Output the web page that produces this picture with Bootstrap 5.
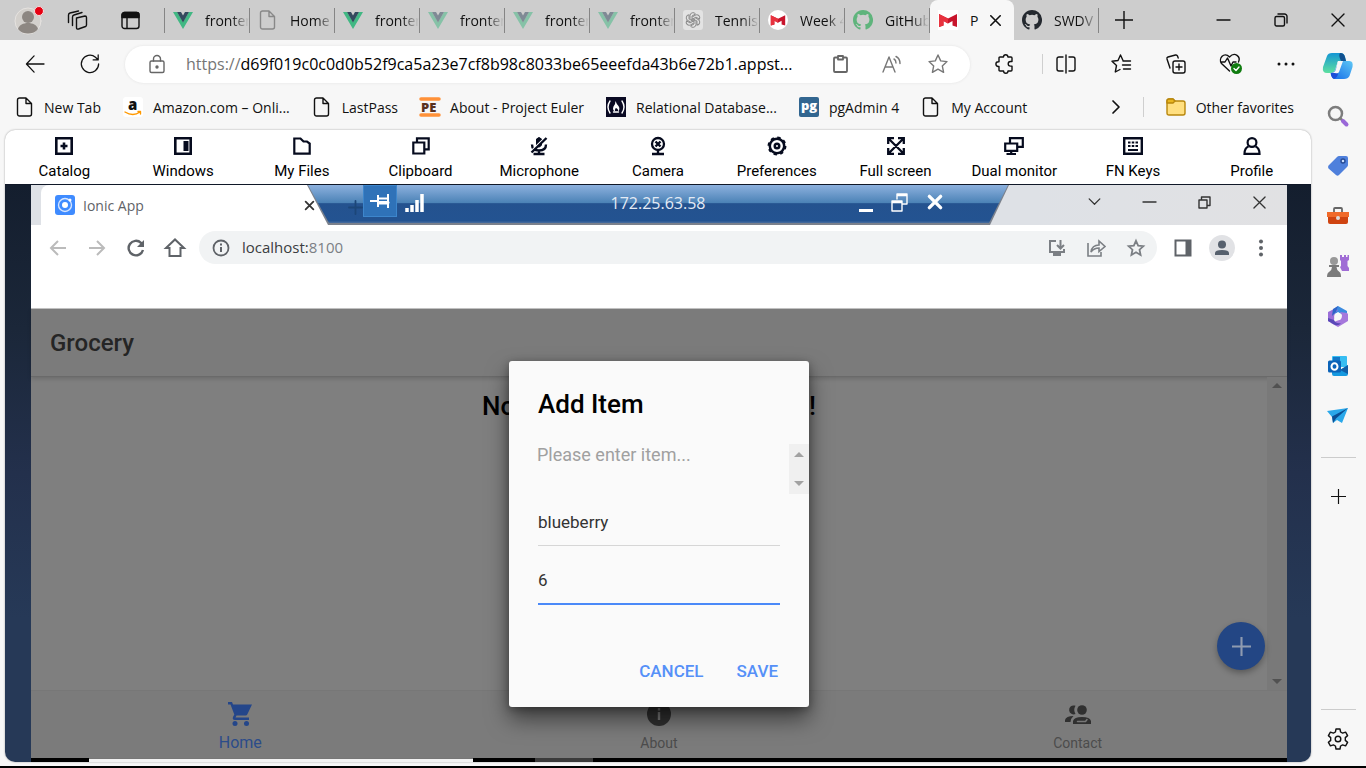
<!DOCTYPE html>
<html lang="en">
<head>
<meta charset="utf-8">
<meta name="viewport" content="width=device-width, initial-scale=1">
<title>Ionic App</title>
<link href="https://cdn.jsdelivr.net/npm/bootstrap@5.3.0/dist/css/bootstrap.min.css" rel="stylesheet">
<style>
  body { font-family: "Open Sans", "Noto Sans", sans-serif; font-size: 14px; color: #111; background: #f7f7f7; border-bottom: 2px solid #000; }
  button { font: inherit; color: inherit; background: none; border: 0; padding: 0; }
  a { color: inherit; text-decoration: none; }
  svg { display: block; flex: none; overflow: visible; fill: none; stroke: currentColor; stroke-width: 1.4; stroke-linecap: round; stroke-linejoin: round; }
  .bold-line { stroke-width: 2; }
  .roboto { font-family: Roboto, sans-serif; }
  .icon-btn { width: 40px; height: 40px; display: flex; align-items: center; justify-content: center; flex: none; }
  .shrinkable { min-width: 0; min-height: 0; }

  /* browser tab strip */
  .strip { height: 40px; background: #cdcdcd; }
  .strip-tools { width: 165px; padding-left: 16px; }
  .strip-tools .spaces { margin: 0 33px 0 23px; }
  .btab { flex: 0 1 85px; min-width: 0; height: 40px; padding-left: 8px; position: relative; }
  .btab::after { content: ""; width: 1px; height: 25px; background: #858585; flex: none; }
  .btab > svg { width: 20px; }
  .btab-title { flex: 1; min-width: 0; margin-left: 12px; overflow: hidden; white-space: nowrap; mask-image: linear-gradient(90deg, #000 60%, transparent); -webkit-mask-image: linear-gradient(90deg, #000 60%, transparent); }
  .btab.current { flex-basis: 84px; background: #f7f7f7; border-radius: 8px 8px 0 0; }
  .btab.current::after { display: none; }
  .faded { opacity: .5; }
  .win-btn { width: 57px; height: 40px; }

  /* address bar */
  .nav-row { height: 48px; gap: 15px; padding: 0 6px 0 15px; }
  .address { height: 37px; border-radius: 19px; background: #fff; box-shadow: 0 0 3px #e2e2e2; padding: 0 12px 0 23px; min-width: 0; }
  .url { font-size: 16px; white-space: nowrap; overflow: hidden; text-overflow: ellipsis; color: #000; }
  .url span { color: #767676; }
  .rule-v { width: 1px; height: 20px; background: #cfcfcf; flex: none; }
  .strip .rule-v { height: 25px; background: #858585; }
  .nav-row .rule-v { margin: 0 -12px 0 2px; }

  .favs { height: 42px; gap: 22px; padding: 0 18px 4px 16px; white-space: nowrap; }
  .favs a { display: flex; align-items: center; gap: 10px; }

  /* side rail */
  .rail { width: 54px; padding: 1px 2px 2px 0; }
  .rail-btn { width: 52px; height: 50px; display: flex; align-items: center; justify-content: center; flex: none; }
  .rail-rule { width: 35px; height: 1px; background: #ccc; flex: none; }
  .rail-add { margin-top: 13px; }

  /* streaming client */
  .client { margin: 0 1px 4px 5px; border-radius: 10px; background: #fff; overflow: hidden; box-shadow: 0 0 2px #999; }
  .menu-item { flex: 1 1 0; height: 54px; font-size: 15px; line-height: 18px; color: #000; padding-top: 7px; }
  .menu-item svg { stroke: #060b1e; stroke-width: 2.6; stroke-linecap: butt; stroke-linejoin: miter; margin-bottom: 7px; }
  .stage { background: linear-gradient(#141e2e, #1b2739 25%, #23304c 50%, #263957 75%); border-top: 1px solid #101828; padding: 0 24px 0 26px; }

  /* remote browser */
  .rtabs { height: 40px; background: linear-gradient(90deg, #dee1e6 80%, #e1e1e3); position: relative; }
  .rtab { width: 287px; margin-left: 10px; background: #fff; border-radius: 8px 8px 0 0; padding: 0 14px; color: #5f6368; font-size: 14px; }
  .rwin { width: 55px; height: 34px; display: flex; align-items: center; justify-content: center; color: #333; }
  .rdp { position: absolute; top: 0; left: 50%; width: 702px; height: 40px; margin-left: -352px; background: #7b818c; clip-path: polygon(0 0, 100% 0, 683px 100%, 21px 100%); }
  .rdp-face { height: 38px; padding: 0 65px 4px 42px; clip-path: polygon(1px 0, 701px 0, 682px 100%, 22px 100%); background: linear-gradient(#8db1de, #4b82b6 47%, #24528f 49%, #235391 94%, #4a6f9f); color: #fff; }
  .rdp-host { padding: 8px 0 0 33px; font-size: 16px; line-height: 20px; color: #e4ebf5; }
  .rdp-restore { margin: 8px 18px 0; }
  .pin { width: 34px; height: 32px; margin-left: 1px; background: #2f72b8; border: 1px solid #3d86cc; }
  .rnav { height: 45px; background: #fff; padding: 0 7px; color: #5f6368; }
  .rbtn { width: 39px; height: 34px; display: flex; align-items: center; justify-content: center; flex: none; }
  .rbtn svg { stroke-width: 2; stroke-linecap: butt; stroke-linejoin: miter; }
  .raddr { height: 33px; border-radius: 17px; background: #f1f3f4; margin: 0 6px 0 5px; padding: 0 2px 0 13px; font-size: 15px; color: #7b7f84; }
  .raddr b { font-weight: 400; color: #3a3d41; }
  .rgap { height: 39px; background: #fff; border-bottom: 1px solid #c4c4c4; }

  /* grocery app */
  .grocery { background: #7f7f7f; position: relative; min-height: 0; }
  .g-head { height: 68px; background: #7b7b7b; border-bottom: 1px solid #6a6a6a; box-shadow: 0 2px 4px rgba(0,0,0,.15); font-size: 24px; font-weight: 500; color: #252525; padding-left: 19px; }
  .g-body { position: relative; }
  .g-note { width: 334px; font-size: 26px; line-height: 32px; font-weight: 500; color: #000; margin: 13px auto 0; }
  .g-scroll { width: 20px; background: #797979; color: #515151; padding: 6px 0; }
  .arrow { border: 5px solid transparent; width: 0; height: 0; }
  .arrow.up { border-top: 0; border-bottom-color: currentColor; }
  .arrow.down { border-bottom: 0; border-top-color: currentColor; }
  .fab { position: absolute; right: 22px; bottom: 20px; width: 48px; height: 48px; border-radius: 50%; background: #234684; color: #8f9bb0; box-shadow: 0 3px 6px rgba(0,0,0,.3); }
  .g-tabs { height: 68px; background: #7b7b7b; border-top: 1px solid #777; }
  .g-tab { flex: 1 1 0; color: #4c4c4c; font-size: 14px; line-height: 18px; padding-top: 11px; gap: 8px; }
  .g-tab.current { color: #2b4c8a; font-size: 16px; }
  .g-tab svg { fill: #303030; stroke: none; }
  .g-tab.current svg { fill: #24468a; }
  .veil { position: absolute; inset: 0; }
  .dialog { width: 300px; background: #fafafa; border-radius: 3px; box-shadow: 0 12px 22px rgba(0,0,0,.5), 0 2px 8px rgba(0,0,0,.3); color: #000; }
  .dialog h2 { font-size: 26px; line-height: 32px; font-weight: 500; margin: 0; padding: 27px 29px 24px; }
  .d-msg { height: 50px; font-size: 18px; line-height: 22px; color: #a0a0a0; }
  .d-scroll { width: 20px; background: #f0f0f0; color: #a2a2a2; padding: 8px 0; }
  .d-fields { padding: 4px 29px 0; }
  .dialog input { display: block; width: 100%; height: 48px; border: 0; border-bottom: 1px solid #d6d6d6; border-radius: 0; background: none; outline: 0; padding: 2px 0 0; font-size: 17px; color: #333; }
  .dialog input.active { height: 50px; border-bottom: 2px solid #4a89f8; margin-top: 9px; }
  .d-actions { padding: 50px 31px 20px; gap: 33px; font-size: 17px; font-weight: 500; color: #5590f8; line-height: 32px; }

  .taskline { height: 4px; background: #000; }
  .taskline i { background: #f2f2f2; width: 384px; margin-left: 58px; border-top: 1px solid #777; }
  .taskline u { background: #3b3b3b; width: 58px; margin-left: 62px; }
</style>
</head>
<body class="d-flex flex-column vh-100 overflow-hidden">

<svg width="0" height="0" class="position-absolute">
  <defs>
    <symbol id="vue" viewBox="0 0 20 18"><path d="M0 1h4l6 10 6-10h4L10 18z" fill="#41b883" stroke="none"/><path d="M4 1h4l2 3.500L12 1h4L10 11.500z" fill="#34495e" stroke="none"/></symbol>
    <symbol id="page" viewBox="0 0 18 20"><path d="M3.500 1H10l5.500 5.500V17a2 2 0 0 1-2 2h-10a2 2 0 0 1-2-2V3a2 2 0 0 1 2-2zM10 1v5.500h5.500"/></symbol>
    <symbol id="mcafee" viewBox="0 0 20 20"><path d="M1 4l9 4.500L19 4v13l-4.500-1.500V11L10 13.500 5.500 11v4.500L1 17z" fill="#c8142c" stroke="none"/><path d="M1 4l9 4.500v5L5.500 11v4.500L1 17z" fill="#e8333f" stroke="none"/></symbol>
    <symbol id="github" viewBox="0 0 16 16"><path stroke="none" fill="currentColor" d="M8 0C3.580 0 0 3.580 0 8c0 3.540 2.290 6.530 5.470 7.590.4.070.55-.17.55-.38 0-.19-.01-.82-.01-1.490-2.010.37-2.530-.49-2.690-.94-.09-.23-.48-.94-.82-1.130-.28-.15-.68-.52-.01-.53.63-.01 1.080.58 1.230.82.72 1.210 1.870.87 2.330.66.07-.52.28-.87.51-1.070-1.780-.2-3.640-.89-3.640-3.950 0-.87.31-1.590.82-2.150-.08-.2-.36-1.020.08-2.120 0 0 .67-.21 2.200.82a7.600 7.600 0 0 1 4 0c1.530-1.040 2.200-.82 2.200-.82.44 1.100.16 1.920.08 2.120.51.56.82 1.270.82 2.150 0 3.070-1.870 3.750-3.650 3.950.29.25.54.73.54 1.480 0 1.070-.01 1.930-.01 2.200 0 .21.15.46.55.38A8 8 0 0 0 8 0z"/></symbol>
    <symbol id="xmark" viewBox="0 0 14 14"><path d="M1 1l12 12M13 1L1 13"/></symbol>
    <symbol id="plus" viewBox="0 0 18 18"><path d="M9 0v18M0 9h18"/></symbol>
    <symbol id="restore" viewBox="0 0 14 14"><path d="M1 5a1.500 1.500 0 0 1 1.500-1.500H9A1.500 1.500 0 0 1 10.500 5v6.500A1.500 1.500 0 0 1 9 13H2.500A1.500 1.500 0 0 1 1 11.500zM4 1h6.500a2.500 2.500 0 0 1 2.500 2.500V10"/></symbol>
    <symbol id="star" viewBox="0 0 20 20"><path d="M10 1l2.700 5.900 6.300.7-4.700 4.300 1.300 6.400L10 15.100l-5.600 3.200 1.300-6.400L1 7.600l6.300-.7z"/></symbol>
  </defs>
</svg>

<header class="strip d-flex align-items-center">
  <div class="strip-tools d-flex align-items-center flex-shrink-0">
    <button aria-label="Profile"><svg width="28" height="30" viewBox="0 0 28 30"><circle cx="12" cy="16" r="13" fill="#d3d0cc" stroke="#e6e3e0" stroke-width="1"/><circle cx="12" cy="12" r="6" fill="#8d8782" stroke="none"/><path d="M2 24c2-8 18-8 20 0-4 6-16 6-20 0z" fill="#8d8782" stroke="none"/><circle cx="23" cy="6" r="4.500" fill="#e60012" stroke="#f4dcdc" stroke-width="1"/></svg></button>
    <button class="spaces" aria-label="Workspaces"><svg width="21" height="20" viewBox="0 0 20 20"><path d="M9 8l8.500-2q1.500 0 1.500 1.500V15q0 1-1 1.500l-7 2.500q-2 .5-2-1.500zM5 15.500V7q0-1.500 1.500-2l8-2.500M1 12.500V5q0-1.500 1.500-2L11 1"/></svg></button>
    <button aria-label="Tab actions"><svg width="19" height="19" viewBox="0 0 19 19"><rect x="1" y="1.500" width="17" height="16" rx="2.500"/><path d="M1 4a2.500 2.500 0 0 1 2.500-2.500h12A2.500 2.500 0 0 1 18 4v2.500H1z" fill="currentColor"/><path d="M6 7v10"/></svg></button>
    <span class="rule-v ms-auto"></span>
  </div>
  <div class="btab d-flex align-items-center"><svg width="20" height="18"><use href="#vue"/></svg><span class="btab-title">fronten</span></div>
  <div class="btab d-flex align-items-center"><svg width="18" height="20" color="#888"><use href="#page"/></svg><span class="btab-title">Home</span></div>
  <div class="btab d-flex align-items-center"><svg width="20" height="18"><use href="#vue"/></svg><span class="btab-title">fronten</span></div>
  <div class="btab d-flex align-items-center"><svg class="faded" width="20" height="18"><use href="#vue"/></svg><span class="btab-title">fronten</span></div>
  <div class="btab d-flex align-items-center"><svg class="faded" width="20" height="18"><use href="#vue"/></svg><span class="btab-title">fronten</span></div>
  <div class="btab d-flex align-items-center"><svg class="faded" width="20" height="18"><use href="#vue"/></svg><span class="btab-title">fronten</span></div>
  <div class="btab d-flex align-items-center"><svg width="20" height="20" viewBox="0 0 20 20"><rect width="20" height="20" rx="3" fill="#e3e3e3" stroke="none"/><g stroke="#8a8a8a" stroke-width="1"><path id="knot" d="M7 8.500V5.500a3 3 0 0 1 5.500-1.500L9 6v5"/><use href="#knot" transform="rotate(60 10 10)"/><use href="#knot" transform="rotate(120 10 10)"/><use href="#knot" transform="rotate(180 10 10)"/><use href="#knot" transform="rotate(240 10 10)"/><use href="#knot" transform="rotate(300 10 10)"/></g></svg><span class="btab-title">Tennis</span></div>
  <div class="btab d-flex align-items-center"><svg width="20" height="20" viewBox="0 0 20 20"><circle cx="10" cy="10" r="10" fill="#fff" stroke="none"/><use href="#mcafee" x="2" y="2" width="16" height="16"/></svg><span class="btab-title">Week 4</span></div>
  <div class="btab d-flex align-items-center"><svg width="20" height="20" color="#5fb47c"><use href="#github"/></svg><span class="btab-title">GitHub</span></div>
  <div class="btab current d-flex align-items-center"><svg width="20" height="20"><rect width="20" height="20" fill="#fff" stroke="none"/><use href="#mcafee"/></svg><span class="ms-2 ps-1">P</span><button class="ms-2 ps-1" aria-label="Close tab"><svg class="bold-line" width="11" height="11"><use href="#xmark"/></svg></button></div>
  <div class="btab d-flex align-items-center"><svg width="20" height="20" color="#24292f"><use href="#github"/></svg><span class="btab-title">SWDV</span></div>
  <button class="ms-3" aria-label="New tab"><svg width="18" height="18"><use href="#plus"/></svg></button>
  <div class="ms-auto d-flex">
    <button class="win-btn d-flex align-items-center justify-content-center" aria-label="Minimize"><svg width="13" height="2"><path d="M0 1h13"/></svg></button>
    <button class="win-btn d-flex align-items-center justify-content-center" aria-label="Restore"><svg width="14" height="14"><use href="#restore"/></svg></button>
    <button class="win-btn d-flex align-items-center justify-content-center" aria-label="Close"><svg width="14" height="14"><use href="#xmark"/></svg></button>
  </div>
</header>

<div class="d-flex flex-fill shrinkable">
  <main class="flex-fill d-flex flex-column shrinkable">
    <nav class="nav-row d-flex align-items-center">
      <button class="icon-btn" aria-label="Back"><svg width="20" height="18" viewBox="0 0 22 20"><path d="M10 1L1.500 10l8.500 9M2 10h19"/></svg></button>
      <button class="icon-btn" aria-label="Reload"><svg width="20" height="20" viewBox="0 0 22 22"><path d="M20.500 11A9.500 9.500 0 1 1 17 3.500L19.500 6M20 1v5.500h-5.500"/></svg></button>
      <div class="address flex-fill d-flex align-items-center">
        <svg width="18" height="20" viewBox="0 0 18 20" color="#666"><rect x="2" y="7" width="14" height="11.500" rx="1.500"/><path d="M5.500 7V5a3.500 3.500 0 0 1 7 0v2"/><circle cx="9" cy="13" r="1" fill="currentColor"/></svg>
        <div class="url flex-fill ms-3 ps-1"><span>https://</span>d69f019c0c0d0b52f9ca5a23e7cf8b98c8033be65eeefda43b6e72b1.appst...</div>
        <button class="flex-shrink-0 me-3" aria-label="Clipboard"><svg width="18" height="18" viewBox="0 0 18 18" color="#666"><path d="M6 2.500H3Q2 2.500 2 3.500V16q0 1 1 1h11q1 0 1-1V3.500q0-1-1-1h-3M6 1h5v3.500H6z" stroke-width="1.800"/></svg></button>
        <button class="flex-shrink-0 ms-3 me-2" aria-label="Read aloud"><svg width="20" height="18" viewBox="0 0 20 18" color="#777"><path d="M1 17L7 2l6 15M3 12h8M12 4q2 1 2 4M14 1.500q4 2 4 7"/></svg></button>
        <button class="icon-btn ms-2" aria-label="Favorite"><svg width="20" height="20" color="#777"><use href="#star"/></svg></button>
      </div>
      <button class="icon-btn" aria-label="Extensions"><svg width="20" height="20" viewBox="0 0 20 20"><path d="M5 3h3.500a2.200 2.200 0 0 1 4.400 0H16q1 0 1 1v3.500h-1.500a2.300 2.300 0 0 0 0 4.600H17V16q0 1-1 1h-3a2.200 2.200 0 0 1-4.400 0H5q-1 0-1-1v-3.500H3.300a2.400 2.400 0 0 1 0-4.800H4V4q0-1 1-1z"/></svg></button>
      <span class="rule-v"></span>
      <button class="icon-btn" aria-label="Split screen"><svg width="20" height="20" viewBox="0 0 20 20"><path d="M7 3H3Q1 3 1 5v10q0 2 2 2h4M13 3h4q2 0 2 2v10q0 2-2 2h-4M10 1v18"/></svg></button>
      <button class="icon-btn" aria-label="Favorites"><svg width="20" height="20" viewBox="0 0 20 20"><path d="M12 6.500L9.500 1 7 6.500l-6 .8 4.500 4.200L4.300 18 9 15.500M12 7h7.500M11.500 11h8M12.500 15h7"/></svg></button>
      <button class="icon-btn" aria-label="Collections"><svg width="20" height="20" viewBox="0 0 20 20"><rect x="7" y="7" width="12" height="12" rx="2"/><path d="M13 10v6M10 13h6M4 14L1 5q-.4-1.500 1-2l7.500-2q1.500-.3 2 1l.7 2"/></svg></button>
      <button class="icon-btn" aria-label="Browser essentials"><svg width="24" height="22" viewBox="0 0 24 22"><path d="M10.500 18L2.500 10.500C-1 6 5-2 10.500 4 16-2 22 4 19.500 9M2 9h4l2.500-4 3.500 8 2-4h3"/><circle cx="17.500" cy="15.500" r="5.500" fill="#107c10" stroke="none"/><path d="M15 15.500l2 2 3-3.500" stroke="#fff"/></svg></button>
      <button class="icon-btn" aria-label="Settings and more"><svg width="18" height="4"><g fill="currentColor" stroke="none"><circle cx="2" cy="2" r="1.500"/><circle cx="9" cy="2" r="1.500"/><circle cx="16" cy="2" r="1.500"/></g></svg></button>
    </nav>

    <nav class="favs d-flex align-items-center">
      <a href="#"><svg width="18" height="20"><use href="#page"/></svg>New Tab</a>
      <a href="#"><svg width="20" height="20" viewBox="0 0 20 20"><rect width="20" height="20" rx="3" fill="#fff" stroke="none"/><text x="5" y="13" font-family="Open Sans" font-weight="800" font-size="15" fill="#111" stroke="none">a</text><path d="M2 15q8 5 15 0M15 14.500h2.500V17" stroke="#f90"/></svg>Amazon.com – Onli...</a>
      <a href="#"><svg width="20" height="20"><use href="#page"/></svg>LastPass</a>
      <a href="#"><svg width="20" height="20" viewBox="0 0 20 20"><path d="M1 2h18M1 18h18" stroke="#ff9138" stroke-width="3.500"/><text x="1" y="15" font-family="Open Sans" font-weight="800" font-size="13" fill="#5a3220" stroke="none">PE</text></svg>About - Project Euler</a>
      <a href="#"><svg width="20" height="20" viewBox="0 0 20 20"><rect width="20" height="20" fill="#0a0a23" stroke="none"/><path d="M4 4q-4 6 0 12M16 4q4 6 0 12M7.500 15h5" stroke="#fff"/><path d="M9.500 4q1 3 3 5 2 3-.500 5.500.5-2-1-3-1.500-1-1.500 0-1 1.500-.5 3-3-1.500-1.500-5 2-2 2-5.500z" fill="#fff" stroke="none"/></svg>Relational Database...</a>
      <a href="#"><svg width="20" height="20" viewBox="0 0 20 20"><rect width="20" height="20" rx="2" fill="#326690" stroke="none"/><text x="2" y="13" font-family="Open Sans" font-weight="800" font-size="13" fill="#fff" stroke="none">pg</text></svg>pgAdmin 4</a>
      <a href="#"><svg width="20" height="20"><use href="#page"/></svg>My Account</a>
      <button class="ms-auto" aria-label="More favorites"><svg width="10" height="16" viewBox="0 0 10 16"><path d="M2 2l6 6-6 6" stroke-width="1.700"/></svg></button>
      <span class="rule-v"></span>
      <a href="#"><svg width="20" height="18" viewBox="0 0 20 18"><path d="M1 3q0-2 2-2h4l2 2h8q2 0 2 2v10q0 2-2 2H3q-2 0-2-2z" fill="#ffdf80" stroke="#b8860b"/><path d="M1 5h6l2-2-2-2H3Q1 1 1 3z" fill="#e8b520" stroke="#b8860b"/></svg>Other favorites</a>
    </nav>

    <section class="client flex-fill d-flex flex-column">
      <nav class="d-flex roboto">
        <button class="menu-item d-flex flex-column align-items-center"><svg width="18" height="18" viewBox="0 0 18 18"><path d="M1.300 1.300h15.400v15.400H1.300zM9 5.500v7M5.500 9h7"/></svg>Catalog</button>
        <button class="menu-item d-flex flex-column align-items-center"><svg width="18" height="18" viewBox="0 0 18 18"><path d="M1.300 1.300h15.400v15.400H1.300z"/><path d="M12 4v10" stroke-width="5"/></svg>Windows</button>
        <button class="menu-item d-flex flex-column align-items-center"><svg width="18" height="18" viewBox="0 0 18 18"><path d="M1.300 1.500h6.200l3 3H14l2.700 2v10.200H1.300z" stroke-width="2.200"/></svg>My Files</button>
        <button class="menu-item d-flex flex-column align-items-center"><svg width="18" height="18" viewBox="0 0 18 18"><path d="M1.300 5.500h11v11h-11zM5 5V1.300h11.700v11H13" stroke-width="2.200"/></svg>Clipboard</button>
        <button class="menu-item d-flex flex-column align-items-center"><svg width="18" height="18" viewBox="0 0 18 18"><path d="M6.500 2q2.500-3 5 0v6q-2.500 4-5 0z" fill="#060b1e" stroke-width="1"/><path d="M2 7.500q0 6 7 6t7-6M9 13v4M3.500 17h11" stroke-width="2.400"/><path d="M1.500 13.500L15.500 0" stroke="#fff" stroke-width="1.500"/><path d="M1.500 15.500L16.500 1" stroke-width="2.400"/></svg>Microphone</button>
        <button class="menu-item d-flex flex-column align-items-center"><svg width="18" height="18" viewBox="0 0 18 18"><circle cx="9" cy="7" r="6" stroke-width="2.300"/><path d="M6.500 4.500l5 5M11.500 4.500l-5 5M9 13v4M3 17h12" stroke-width="2.400"/></svg>Camera</button>
        <button class="menu-item d-flex flex-column align-items-center"><svg width="20" height="18" viewBox="0 0 20 20"><circle cx="10" cy="10" r="8" stroke-width="2.800"/><circle cx="10" cy="10" r="9.500" stroke-width="2" stroke-dasharray="3.700 3.760"/><circle cx="10" cy="10" r="2.500" stroke-width="2.800"/></svg>Preferences</button>
        <button class="menu-item d-flex flex-column align-items-center"><svg width="18" height="18" viewBox="0 0 18 18"><path d="M1.200 7V1.200H7M11 1.200h5.800V7M16.800 11v5.800H11M7 16.800H1.200V11M2 2l14 14M16 2L2 16" stroke-width="2.300"/></svg>Full screen</button>
        <button class="menu-item d-flex flex-column align-items-center"><svg width="20" height="18" viewBox="0 0 20 18"><path d="M1.200 6.500h12v7.300h-12zM6 6V1.200h12.800v8.600H14M7.200 14v3M2.500 17h9.500" stroke-width="2.200"/></svg>Dual monitor</button>
        <button class="menu-item d-flex flex-column align-items-center"><svg width="20" height="18" viewBox="0 0 20 18"><path d="M1.200 1.200h17.600v15.600H1.200z" stroke-width="2.400"/><path d="M5 5.500h10M5 9h10" stroke-dasharray="2.500 1.250" stroke-width="2.200"/><path d="M5 13h10" stroke-width="2.200"/></svg>FN Keys</button>
        <button class="menu-item d-flex flex-column align-items-center"><svg width="18" height="18" viewBox="0 0 18 18"><circle cx="9" cy="5.500" r="4.400" stroke-width="2.200"/><path d="M5.500 9.500Q1.500 11 1.500 16.800h15q0-5.800-4-7.300" stroke-width="2.200"/></svg>Profile</button>
      </nav>

      <div class="stage flex-fill d-flex flex-column">
        <div class="rtabs d-flex">
          <div class="rtab d-flex align-items-center">
            <svg width="20" height="20" viewBox="0 0 20 20"><rect width="20" height="20" rx="3" fill="#3f8bff" stroke="none"/><circle cx="10" cy="10" r="6.500" stroke="#d5e5ff"/><circle cx="10" cy="10" r="3" fill="#fff" stroke="none"/><circle cx="15" cy="5" r="1.500" fill="#fff" stroke="none"/></svg>
            <span class="ms-2">Ionic App</span>
            <button class="ms-auto" aria-label="Close tab"><svg width="9" height="9" color="#333" viewBox="0 0 14 14"><path d="M1 1l12 12M13 1L1 13" stroke-width="2.800"/></svg></button>
          </div>
          <div class="ms-auto d-flex">
            <button class="rwin" aria-label="Search tabs"><svg width="13" height="8" viewBox="0 0 14 9"><path d="M1 1l6 6 6-6"/></svg></button>
            <button class="rwin" aria-label="Minimize"><svg width="13" height="2"><path d="M0 1h13"/></svg></button>
            <button class="rwin" aria-label="Restore"><svg width="13" height="13" viewBox="0 0 13 13"><path d="M1 4h8v8H1zM3.500 3.500V1H12v8.500H9.500"/></svg></button>
            <button class="rwin" aria-label="Close"><svg width="13" height="13"><use href="#xmark"/></svg></button>
          </div>
          <div class="rdp">
            <div class="rdp-face d-flex align-items-start">
              <svg class="mt-3" width="13" height="13" viewBox="0 0 18 18" color="#1c4678"><path d="M9 0v18M0 9h18" stroke-width="2.500"/></svg>
              <button class="pin d-flex align-items-center justify-content-center" aria-label="Pin"><svg width="20" height="16" viewBox="0 0 20 16" color="#fff"><path d="M0 8h8M8 2v12M9 5.500h9M9 10.500h9M18 1v14" stroke-width="2" stroke-linecap="butt"/><path d="M9 9.500h9" stroke-width="3"/></svg></button>
              <svg class="mt-2 ms-2" width="19" height="20" viewBox="0 0 19 20" color="#fff"><path d="M2 15v4M7 12v7M12 7v12M17 1v18" stroke-width="3.500" stroke-linecap="butt"/></svg>
              <span class="rdp-host mx-auto">172.25.63.58</span>
              <svg class="mt-4" width="14" height="4"><path d="M0 1.500h14" stroke-width="3" stroke-linecap="butt"/></svg>
              <svg class="rdp-restore" width="17" height="19" viewBox="0 0 17 19"><path d="M1 8h10v10H1zM1 9.500h10M6 6V1h10v10h-4M6 2.500h10"/></svg>
              <svg class="mt-2" width="18" height="18" viewBox="0 0 16 16"><path d="M3 3l10 10M13 3L3 13" stroke-width="3"/></svg>
            </div>
          </div>
        </div>
        <div class="rnav d-flex align-items-center">
          <button class="rbtn" aria-label="Back"><svg width="18" height="16" viewBox="0 0 18 16" color="#bbb"><path d="M17 8H2M9 1L2 8l7 7"/></svg></button>
          <button class="rbtn" aria-label="Forward"><svg width="18" height="16" viewBox="0 0 18 16" color="#bbb"><path d="M1 8h15M9 1l7 7-7 7"/></svg></button>
          <button class="rbtn" aria-label="Reload"><svg width="18" height="18" viewBox="0 0 18 18"><path d="M16 11A7.300 7.300 0 1 1 14 3.800L16 6" stroke-width="2.400"/><path d="M17 1v7h-7z" fill="currentColor" stroke="none"/></svg></button>
          <button class="rbtn" aria-label="Home"><svg width="20" height="20" viewBox="0 0 20 20"><path d="M1 10l9-8.500 9 8.500h-3.500v8h-11v-8z"/></svg></button>
          <div class="raddr flex-fill d-flex align-items-center">
            <svg width="18" height="18" viewBox="0 0 18 18" color="#5f6368"><circle cx="9" cy="9" r="7.500" stroke-width="1.800"/><path d="M9 8v5M9 4.500v2" stroke-width="2" stroke-linecap="butt"/></svg>
            <span class="ms-2 ps-1"><b>localhost:</b>8100</span>
            <button class="rbtn ms-auto" aria-label="Install"><svg width="19" height="18" viewBox="0 0 19 18"><path d="M8 2H2v11h14v-3M12.500 1v8M9 6l3.500 3.500L16 6"/><path d="M5 15.500h8" stroke-width="3"/></svg></button>
            <button class="rbtn" aria-label="Share"><svg width="20" height="18" viewBox="0 0 20 18"><path d="M1 4v13h13v-4M4 13q1-7 8-7V2l6 5.500-6 5V9q-5 0-8 4z" stroke-width="1.600"/></svg></button>
            <button class="rbtn" aria-label="Bookmark"><svg width="18" height="18" viewBox="0 0 20 20"><path d="M10 2l2.400 5.300 5.800.6-4.300 4 1.200 5.800L10 14.800l-5.100 2.900 1.200-5.800-4.300-4 5.800-.6z"/></svg></button>
          </div>
          <button class="rbtn" aria-label="Side panel"><svg width="18" height="18" viewBox="0 0 18 18"><path d="M1.500 1.500h15v15h-15z"/><path d="M14 1v16" stroke-width="5"/></svg></button>
          <button class="rbtn" aria-label="Account"><svg width="26" height="26" viewBox="0 0 26 26"><circle cx="13" cy="13" r="13" fill="#e1e2e5" stroke="none"/><circle cx="13" cy="9.500" r="4" fill="#56606d" stroke="none"/><path d="M6 20v-2q0-3 7-3t7 3v2z" fill="#56606d" stroke="none"/></svg></button>
          <button class="rbtn" aria-label="Menu"><svg width="4" height="18"><g fill="currentColor" stroke="none"><circle cx="2" cy="2.500" r="2"/><circle cx="2" cy="9" r="2"/><circle cx="2" cy="15.500" r="2"/></g></svg></button>
        </div>
        <div class="rgap"></div>

        <div class="grocery flex-fill d-flex flex-column roboto">
          <div class="g-head d-flex align-items-center">Grocery</div>
          <div class="g-body flex-fill d-flex">
            <div class="flex-fill"><div class="g-note d-flex justify-content-between"><span>No</span><span>!</span></div></div>
            <div class="g-scroll d-flex flex-column align-items-center justify-content-between"><span class="arrow up"></span><span class="arrow down"></span></div>
            <button class="fab d-flex align-items-center justify-content-center" aria-label="Add"><svg class="bold-line" width="19" height="19"><use href="#plus"/></svg></button>
          </div>
          <nav class="g-tabs d-flex">
            <a href="#" class="g-tab current d-flex flex-column align-items-center"><svg width="24" height="24" viewBox="0 0 24 24"><path d="M0 0h4l1 2.500h19l-4.500 9.500q-.7 1.500-2 1.500H8.500L7.500 15.500H21V18H7q-3 0-2-3l1.300-2.500L2.500 2.500H0z"/><circle cx="7" cy="21.500" r="2.500"/><circle cx="18.500" cy="21.500" r="2.500"/></svg>Home</a>
            <a href="#" class="g-tab d-flex flex-column align-items-center"><svg width="24" height="24" viewBox="0 0 24 24"><circle cx="12" cy="12" r="12"/><path d="M12 10v8M12 6v2.500" stroke="#777" stroke-width="2.400" stroke-linecap="butt"/></svg>About</a>
            <a href="#" class="g-tab d-flex flex-column align-items-center"><svg width="26" height="24" viewBox="0 0 26 24"><path d="M9.500 3.500a4.500 4.500 0 1 0 1 8.500 8 8 0 0 1 0-8.200zM0 20v-2q1-4 8.500-4Q6 16 5.500 20z"/><circle cx="17" cy="8" r="4.800"/><path d="M8 22v-3q1-4 9-4t9 4v3z"/><path d="M12.500 19.500h8l1.500-2" stroke="#777" stroke-width="1.500"/></svg>Contact</a>
          </nav>

          <div class="veil d-flex align-items-center justify-content-center">
            <form class="dialog" onsubmit="return false">
              <h2>Add Item</h2>
              <div class="d-msg d-flex">
                <span class="flex-fill ps-4 ms-1">Please enter item...</span>
                <div class="d-scroll d-flex flex-column align-items-center justify-content-between"><span class="arrow up"></span><span class="arrow down"></span></div>
              </div>
              <div class="d-fields">
                <input type="text" value="blueberry" aria-label="Item">
                <input class="active" type="text" inputmode="numeric" value="6" aria-label="Quantity">
              </div>
              <div class="d-actions d-flex justify-content-end"><button type="button">CANCEL</button><button type="submit">SAVE</button></div>
            </form>
          </div>
        </div>
        <div class="taskline d-flex"><i></i><u></u></div>
      </div>
    </section>
  </main>

  <aside class="rail d-flex flex-column align-items-center">
    <button class="rail-btn" aria-label="Copilot"><svg width="30" height="28" viewBox="0 0 30 28"><defs><linearGradient id="cpA" x1="0" y1="0" x2="0" y2="1"><stop stop-color="#1496d4"/><stop offset="1" stop-color="#5ee0a0"/></linearGradient><linearGradient id="cpB" x1="1" y1="0" x2="0" y2="1"><stop stop-color="#5fc8f5"/><stop offset="1" stop-color="#1268e8"/></linearGradient></defs><g stroke="none"><path d="M9 1h9q3 0 4 4l1 4h-5l-3 0-3 9q-1 3-4 3H4q-5 0-4-6L4 4q1-3 5-3z" fill="url(#cpA)"/><path d="M17 1q4 0 5 4l1 4h-5q-3-6-1-8z" fill="#10508f"/><path d="M21 27h-9q-3 0-4-4l-.500-2q4 0 5-4l3-8h11q4 0 3 6l-3 9q-1.500 3-5.500 3z" fill="url(#cpB)"/><path d="M8 21q3 0 5-2l2 3q-1 4-4 5-2-1-3-4z" fill="#1a4fd8"/><path d="M15 9h5l-4 11q-1 2-4 1h-4q4 0 5-4z" fill="#f7f7f7"/></g></svg></button>
    <button class="rail-btn" aria-label="Search"><svg width="22" height="22" viewBox="0 0 22 22"><circle cx="8.500" cy="8.500" r="6.500" stroke="#7d7d7d" stroke-width="2.500"/><path d="M13.500 13.500l2 2" stroke="#7d7d7d" stroke-width="2.500"/><path d="M16 16l3.500 3.500" stroke="#9a68d8" stroke-width="4"/></svg></button>
    <button class="rail-btn" aria-label="Shopping"><svg width="22" height="22" viewBox="0 0 22 22"><path d="M12 1h7q2 0 2 2v7q0 1-1 2l-8 8q-1.500 1.500-3 0l-7.500-6.500q-1-1.500 0-3L10 2q1-1 2-1z" fill="#4f80dc" stroke="none"/><circle cx="16" cy="6" r="2" stroke="#274b94" fill="#c8dcff"/></svg></button>
    <button class="rail-btn" aria-label="Tools"><svg width="22" height="18" viewBox="0 0 22 18"><path d="M7 5V2q0-1 1-1h6q1 0 1 1v3" stroke="#666" stroke-width="1.800"/><path d="M1 9h20v6q0 2-2 2H3q-2 0-2-2z" fill="#cf4411" stroke="none"/><path d="M0 5h22v5H0z" fill="#f06a2a" stroke="none"/><circle cx="11" cy="11" r="2" fill="#ddd" stroke="none"/></svg></button>
    <button class="rail-btn" aria-label="Games"><svg width="22" height="22" viewBox="0 0 22 22"><g stroke="none"><path d="M13 0h2v2h2V0h2v2h1.500V0H22v5l-1.500 1v5l1.500 2v3h-7l-2-4 1-1V6L13 5z" fill="#a06cd5"/><circle cx="7" cy="6" r="4" fill="#999"/><path d="M2 10h10v2H9.500q0 3 3 5 1.500 1 1.500 5H0q0-4 2-5 3-2 3-5H2z" fill="#7b7b7b"/></g></svg></button>
    <button class="rail-btn" aria-label="Microsoft 365"><svg width="20" height="21" viewBox="0 0 20 21"><g stroke="none"><path d="M10 0l9 5v6l-6-3-3-2-4 3-1-5z" fill="#3b8be0"/><path d="M6 3L0 6v9l7 4q-2-1-1-5l1-7 3-3z" fill="#9b6fd8"/><path d="M19 7l1 1v7l-10 6-7-4 3-1 7-3 1-4-2-3z" fill="#a678dc"/><path d="M5 9l3-3 2-6-5 3-1 7z" fill="#2f64c8"/><path d="M0 12v3l7 4q4 1 6-2-5 1-7-3z" fill="#5a48b8"/><circle cx="10" cy="10.500" r="3.700" fill="#f7f7f7"/></g></svg></button>
    <button class="rail-btn" aria-label="Outlook"><svg width="20" height="20" viewBox="0 0 20 20"><g stroke="none"><path d="M5 0h13q1 0 1 1v10H4V1q0-1 1-1z" fill="#36bdf2"/><path d="M5 1h7v5H5z" fill="#1478c8"/><path d="M4 10l8 4 8-5v9q0 2-2 2H6q-2 0-2-2z" fill="#1599e0"/><path d="M12 14l8-5v9z" fill="#0f5ea8"/><rect y="4.500" width="13" height="12" rx="1.500" fill="#0b63b8"/></g><ellipse cx="6.500" cy="10.500" rx="3" ry="3.300" stroke="#fff" stroke-width="2"/></svg></button>
    <button class="rail-btn" aria-label="Drop"><svg width="22" height="16" viewBox="0 0 22 16"><g stroke="none"><path d="M0 3l21-3-6 15-5-3-4 3-1-6z" fill="#2aa8ea"/><path d="M21 0L5 8.500 6 15l3-4.500z" fill="#0b4f94"/></g></svg></button>
    <span class="rail-rule mt-3"></span>
    <button class="rail-btn rail-add" aria-label="Customize"><svg width="15" height="15"><use href="#plus"/></svg></button>
    <span class="rail-rule mt-auto"></span>
    <button class="rail-btn mt-1" aria-label="Settings"><svg width="22" height="22" viewBox="0 0 22 22"><path d="M9 1h4l.6 3 2 1.100 3-1 2 3.500-2.300 2v2.800l2.300 2-2 3.500-3-1-2 1.100L13 21H9l-.6-3-2-1.100-3 1-2-3.500 2.300-2V9.600l-2.300-2 2-3.500 3 1 2-1.100z"/><circle cx="11" cy="11" r="2.800"/></svg></button>
  </aside>
</div>

<script src="https://cdn.jsdelivr.net/npm/bootstrap@5.3.0/dist/js/bootstrap.bundle.min.js"></script>
</body>
</html>
